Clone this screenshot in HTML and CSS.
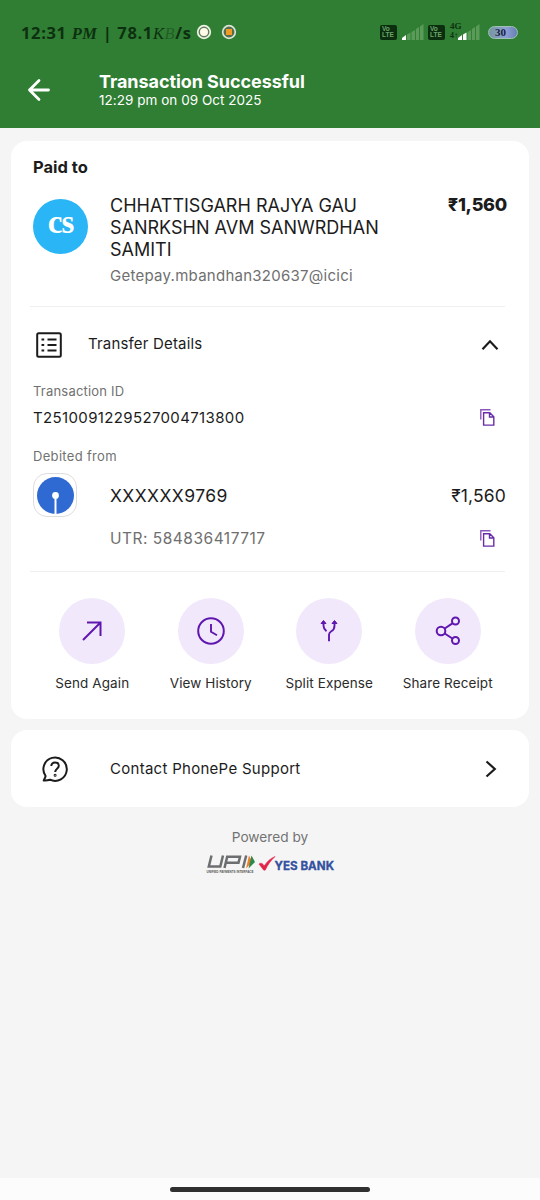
FILE: index.html
```html
<!DOCTYPE html>
<html lang="en">
<head>
<meta charset="utf-8">
<title>Transaction Successful</title>
<link rel="stylesheet" href="styles.css">
</head>
<body>
<header class="top">
  <div class="status">
    <span class="clock">12:31 <i>PM</i> | 78.1<i class="unit">K</i><em>B</em>/s</span>
    <svg class="dots" width="42" height="18" viewBox="0 0 42 18"><circle cx="9" cy="9" r="6.3" fill="#627b59" stroke="#eef3e6" stroke-width="1.7"/><circle cx="9" cy="9" r="4" fill="#fffbe9"/><circle cx="34" cy="9" r="6.3" fill="#526d50" stroke="#dce4d5" stroke-width="1.7"/><rect x="31" y="6" width="6" height="6" fill="#f39a22"/></svg>
    <span class="spacer"></span>
    <span class="volte">Vo<br>LTE</span>
    <svg class="bars" width="22" height="17" viewBox="0 0 22 17"><g fill="#5a9b59"><path d="M5 10.500l3.500-2V16H5z"/><path d="M9.500 8 13 6v10H9.500z"/><path d="M14 5l3-2v13h-3z"/><path d="M18 2.500 21.500 0v16H18z"/></g><path d="M0 16v-2l4-3v5z" fill="#fff"/></svg>
    <span class="volte second">Vo<br>LTE</span>
    <span class="net">4G<br><small>4↑</small></span>
    <svg class="bars last" width="22" height="17" viewBox="0 0 22 17"><g fill="#5a9b59"><path d="M9.500 8 13 6v10H9.500z"/><path d="M14 5l3-2v13h-3z"/><path d="M18 2.500 21.500 0v16H18z"/></g><path d="M0 16v-2l4-3v5zM5 10.500l3.500-2V16H5z" fill="#fff"/></svg>
    <span class="battery">30</span>
  </div>
  <div class="title-row">
    <svg class="back" width="24" height="24" viewBox="0 0 24 24"><path d="M12 2.500 2.500 12l9.500 9.500M2.500 12H21.500" fill="none" stroke="#fff" stroke-width="2.800" stroke-linecap="round" stroke-linejoin="round"/></svg>
    <div>
      <h1>Transaction Successful</h1>
      <p class="date">12:29 pm on 09 Oct 2025</p>
    </div>
  </div>
</header>
<main>
  <section class="card">
    <h2>Paid to</h2>
    <div class="payee">
      <div class="avatar">cs</div>
      <div class="who">
        <p class="name">CHHATTISGARH RAJYA GAU<br>SANRKSHN AVM SANWRDHAN<br>SAMITI</p>
        <p class="vpa">Getepay.mbandhan320637@icici</p>
      </div>
      <strong class="amount">₹1,560</strong>
    </div>
    <div class="details-head">
      <svg width="26" height="26" viewBox="0 0 26 26" fill="none" stroke="#1b1b1b" stroke-width="2"><rect x="1.200" y="1.200" width="23.600" height="23.600" rx="1.500"/><path d="M5.500 7.500h2.700M5.500 13h2.700M5.500 18.500h2.700M11.500 7.500h9M11.500 13h9M11.500 18.500h9"/></svg>
      <span class="details-label">Transfer Details</span>
      <svg class="chev" width="18" height="12" viewBox="0 0 18 12"><path d="M1.500 10.300 9 2.300l7.500 8" fill="none" stroke="#1b1b1b" stroke-width="2.200"/></svg>
    </div>
    <p class="label">Transaction ID</p>
    <div class="line id-line">
      <span class="txn">T2510091229527004713800</span>
      <svg class="copy" width="15" height="17" viewBox="0 0 15 17" fill="none" stroke="#6a2ca8" stroke-width="1.400"><path d="M.8 10.500V.8h9.700" stroke="#8a58bb"/><path d="M3.600 3.800h6.200l4 4v8.300H3.600zM9.500 4v4h4"/></svg>
    </div>
    <p class="label debited">Debited from</p>
    <div class="line account">
      <span class="bank"><svg width="37" height="37" viewBox="0 0 37 37"><circle cx="18.500" cy="18.500" r="18.500" fill="#2f69d2"/><circle cx="18.500" cy="18.500" r="3.400" fill="#fff"/><path d="M17.500 20h2v17h-2z" fill="#fff"/></svg></span>
      <span class="number">XXXXXX9769</span>
      <span class="debit">₹1,560</span>
    </div>
    <div class="line utr-line">
      <span class="utr">UTR: 584836417717</span>
      <svg class="copy" width="15" height="17" viewBox="0 0 15 17" fill="none" stroke="#6a2ca8" stroke-width="1.400"><path d="M.8 10.500V.8h9.700" stroke="#8a58bb"/><path d="M3.600 3.800h6.200l4 4v8.300H3.600zM9.500 4v4h4"/></svg>
    </div>
    <div class="actions">
      <div class="action"><span class="disc"><svg width="30" height="30" viewBox="0 0 30 30"><path d="M6 24 23.500 6.500M10 6.500h13.500V20" fill="none" stroke="#5f17b0" stroke-width="2"/></svg></span><span>Send Again</span></div>
      <div class="action"><span class="disc"><svg width="30" height="30" viewBox="0 0 30 30"><path d="M15 8v7.800l6 3.500" fill="none" stroke="#5f17b0" stroke-width="1.900"/><circle cx="15" cy="15" r="12.800" fill="none" stroke="#5f17b0" stroke-width="2"/></svg></span><span>View History</span></div>
      <div class="action"><span class="disc"><svg width="30" height="30" viewBox="0 0 30 30" fill="none" stroke="#5f17b0" stroke-width="1.900"><path d="M9.500 6.500v3.200c0 2.500.8 3.700 3 5.500M20.500 6.500v3.200c0 3-1 4.300-3.200 5.600-1.500.9-2.300 1.800-2.300 3.400v6.600"/><path d="M9.500 4.500 12 7.500H7zM20.500 4.500l2.500 3h-5z" fill="#5f17b0" stroke-width="1"/></svg></span><span>Split Expense</span></div>
      <div class="action"><span class="disc"><svg width="30" height="30" viewBox="0 0 30 30" fill="none" stroke="#5f17b0" stroke-width="2"><circle cx="8" cy="15" r="4.300"/><circle cx="22.500" cy="5" r="3.500"/><circle cx="22.500" cy="24.500" r="3.500"/><path d="m11.700 12.500 7.700-5.200M11.700 17.500l7.700 5"/></svg></span><span>Share Receipt</span></div>
    </div>
  </section>
  <section class="card support">
    <svg width="26" height="26" viewBox="0 0 26 26" fill="none" stroke="#1b1b1b" stroke-width="2"><path d="M3.600 20A11.700 11.700 0 1 1 8 23.700c-1.500.5-3.500.9-6.300.7C2.500 23 3.300 21.600 3.600 20z" stroke-linejoin="round"/><path d="M9.300 10c0-2 1.500-3.400 3.700-3.400s3.800 1.300 3.800 3.200c0 3.200-3.600 2.800-3.600 6.200"/><circle cx="13.100" cy="19.200" r=".5"/></svg>
    <span class="support-label">Contact PhonePe Support</span>
    <svg class="go" width="12" height="18" viewBox="0 0 12 18"><path d="M1.500 1.500 9.800 9l-8.300 7.500" fill="none" stroke="#1b1b1b" stroke-width="2.200"/></svg>
  </section>
  <footer>
    <p class="powered">Powered by</p>
    <svg class="logos" width="130" height="22" viewBox="0 0 130 22">
      <g fill="none" stroke="#6d6e70" stroke-width="2.500"><path d="M6.500 1.500 3.800 12.500h11.500L18 1.500M19.500 14 22.200 2.800H35l-1.500 5.900H21M38 14l3.200-12.500"/></g>
      <path d="m44 1.500 3.500 6.500-6.500 6.500z" fill="#ef7d2d"/><path d="m46.500 1.500 3.500 6.500-6.500 6.500z" fill="#2c8a4b"/>
      <text x="1.500" y="19" class="upi-sub" textLength="47" lengthAdjust="spacingAndGlyphs">UNIFIED PAYMENTS INTERFACE</text>
      <path d="M54 10c2-1.700 3.800-.6 5.200 2C62 7.500 65.500 4.500 70 2.500 65.500 7 62.500 11 60.300 16c-1.300.5-1.800.2-2.300-.8z" fill="#e3244a" stroke="#e3244a" stroke-width=".6"/>
      <text x="69.500" y="16" class="yes" textLength="59.500" lengthAdjust="spacingAndGlyphs">YES BANK</text>
    </svg>
  </footer>
</main>
<nav class="gesture"><span></span></nav>
</body>
</html>
```

FILE: styles.css
```css
* { box-sizing: border-box; }
body { margin: 0; width: 540px; height: 1200px; display: flex; flex-direction: column; background: #f5f5f5; color: #1c1c1c; font-family: Inter, Roboto, sans-serif; overflow: hidden; }
h1, h2, p { margin: 0; }
svg { flex: none; display: block; }
.top { height: 128px; background: #2f7e33; color: #fff; }
.status { height: 64px; padding: 0 21px; display: flex; align-items: center; color: #0d3010; }
.clock { width: 174px; padding-top: 2px; font: bold 16.500px/20px "Open Sans", sans-serif; white-space: nowrap; letter-spacing: .65px; }
.clock i { font-family: "Liberation Serif", serif; }
.clock .unit { font-weight: 400; }
.clock em { color: #245e27; font-family: "Liberation Serif", serif; font-weight: 400; }
.spacer { flex: 1; }
.volte { width: 17px; height: 15px; border-radius: 2px; background: #0b2e0e; color: #6ba66c; font: bold 6.500px/6.500px "Liberation Sans", sans-serif; padding: 1px 0 0 2px; margin-right: 5px; }
.second { margin-left: 4px; margin-right: 5px; }
.net { width: 13px; font: bold 9px/9px "Liberation Serif", serif; white-space: nowrap; margin-top: -2px; }
.net small { font-size: 8px; }
.last { margin-left: -5px; margin-right: 8px; }
.battery { width: 30px; height: 13px; margin-right: 1px; border: 1px solid #9fc0b5; border-radius: 7px; background: linear-gradient(90deg, #7597a0, #8e9fd5 60%, #6681b4); color: #18213c; font: bold 11px/11px "Liberation Serif", serif; padding-left: 6px; }
.title-row { display: flex; align-items: flex-start; padding: 7px 26px; }
.back { margin: 7px 48px 0 1px; }
h1 { font-size: 18px; line-height: 21px; font-weight: 700; white-space: nowrap; letter-spacing: -.06px; }
.date { font-size: 13.500px; line-height: 17px; letter-spacing: .03px; }
main { flex: 1; padding: 13px 11px 0; }
.card { background: #fff; border-radius: 16px; padding: 0 22px; height: 578px; }
h2 { font-size: 16.500px; line-height: 20px; padding-top: 16px; font-weight: 700; letter-spacing: 0; }
.payee { display: flex; margin: 17px 2px 0 -3px; padding: 0 0 0 3px; height: 113px; border-bottom: 1px solid #efefef; }
.avatar { width: 55px; height: 55px; margin-top: 5px; border-radius: 50%; background: #29b5f6; color: #fff; font: bold 33px/47px "Liberation Serif", serif; letter-spacing: -1px; text-align: center; }
.who { margin-left: 22px; padding-top: 1px; white-space: nowrap; }
.name { font-size: 18px; line-height: 22px; }
.vpa { font-size: 15px; line-height: 20px; margin-top: 5px; color: #6f6f6f; letter-spacing: .26px; }
.amount { margin: 0 -2px 0 auto; font-size: 18px; line-height: 22px; font-weight: 800; letter-spacing: -.25px; }
.details-head { height: 75px; display: flex; align-items: center; padding: 0 8px 0 3px; }
.details-label { margin: -3px 0 0 26px; font-size: 15px; letter-spacing: .18px; }
.chev { margin-left: auto; }
.label { font-size: 13px; line-height: 18px; color: #717171; letter-spacing: .2px; }
.line { display: flex; align-items: center; }
.id-line { height: 36px; padding-bottom: 2px; }
.txn { font-size: 15px; letter-spacing: .36px; }
.copy { margin-left: auto; margin-right: 12px; }
.debited { margin-top: 11px; letter-spacing: .32px; }
.account { height: 44px; margin-top: 8px; margin-bottom: 1px; }
.bank { width: 44px; height: 44px; border: 1px solid #ddd; border-radius: 14px; display: grid; place-items: center; }
.number { margin-left: 33px; font-size: 17.500px; letter-spacing: .43px; }
.debit { margin-left: auto; font-size: 17.500px; letter-spacing: .15px; margin-right: 1px; }
.utr-line { height: 42px; padding-bottom: 2px; padding-left: 77px; }
.utr { color: #6f6f6f; font-size: 15.500px; letter-spacing: .5px; }
.actions { margin: 11px 2px 0 -3px; padding: 26px 0 0 3px; border-top: 1px solid #efefef; display: flex; }
.action { width: 118.500px; flex: none; display: flex; flex-direction: column; align-items: center; font-size: 13.500px; line-height: 18px; letter-spacing: .1px; white-space: nowrap; color: #2b2b2b; }
.disc { width: 66px; height: 66px; margin-bottom: 10px; border-radius: 50%; background: #f1e8fb; display: grid; place-items: center; }
.support { height: 77px; margin-top: 11px; padding: 0 32px 0 31px; display: flex; align-items: center; }
.support-label { margin-left: 42px; font-size: 15px; letter-spacing: .28px; }
.go { margin-left: auto; }
footer { display: flex; flex-direction: column; align-items: center; padding-top: 21px; }
.powered { font-size: 13.700px; line-height: 18px; color: #737373; }
.logos { margin-top: 8px; }
.upi-sub { font: bold 3.500px "Liberation Sans", sans-serif; fill: #555; }
.yes { font: bold 11.500px Inter, sans-serif; fill: #3450a0; stroke: #3450a0; stroke-width: .3px; }
.gesture { height: 22px; background: #fcfcfc; display: flex; justify-content: center; align-items: center; }
.gesture span { width: 200px; height: 5px; border-radius: 3px; background: #303030; }
```
